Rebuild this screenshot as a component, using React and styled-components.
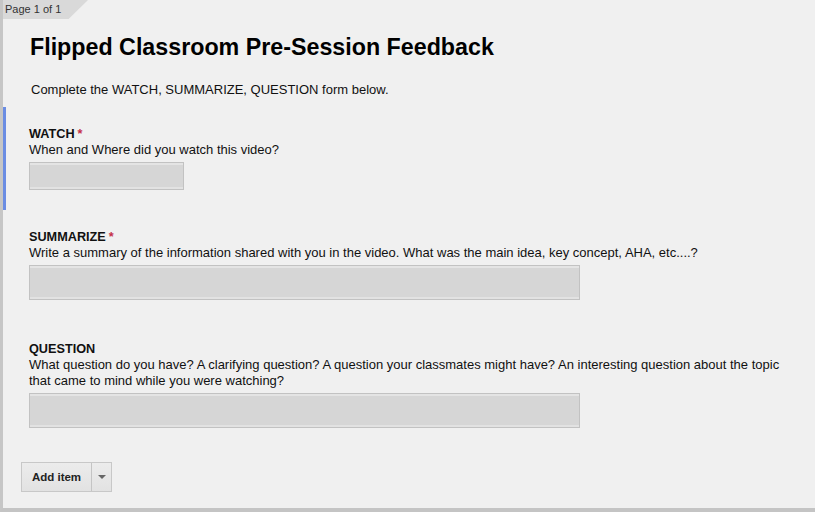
import React from "react";
import styled, { createGlobalStyle } from "styled-components";

const Global = createGlobalStyle`
  html, body { margin: 0; padding: 0; background: #f0f0f0; }
  body { font-family: "Liberation Sans", Arial, sans-serif; color: #111; }
`;

const Frame = styled.div`
  width: 815px;
  height: 512px;
  box-sizing: border-box;
  border-left: 3px solid #c6c6c6;
  border-bottom: 4px solid #c4c4c4;
  background: #f0f0f0;
  display: flex;
  flex-direction: column;
  overflow: hidden;
`;

const PageTab = styled.div`
  width: 88px;
  height: 19px;
  margin-left: -3px;
  background: #d9d9d9;
  clip-path: polygon(0 0, 100% 0, 78% 100%, 0 100%);
  font-size: 11px;
  color: #333;
  line-height: 19px;
  padding-left: 5px;
  box-sizing: border-box;
`;

const Title = styled.h1`
  margin: 15px 0 0 27px;
  font-size: 23.25px;
  line-height: 26px;
  font-weight: bold;
  color: #000;
`;

const Intro = styled.p`
  margin: 22px 0 0 28px;
  font-size: 13px;
  line-height: 16px;
  color: #111;
`;

const Items = styled.div`
  margin-top: 9px;
  display: flex;
  flex-direction: column;
`;

const Item = styled.div`
  border-left: 3px solid ${(p) => (p.$active ? "#6b8de3" : "transparent")};
  padding: 19px 20px ${(p) => p.$pb || 20}px 23px;
  display: flex;
  flex-direction: column;
`;

const Label = styled.div`
  font-size: 12.7px;
  line-height: 16px;
  font-weight: bold;
  color: #111;
`;

const Req = styled.span`
  color: #c5304a;
  margin-left: 3px;
`;

const Help = styled.div`
  font-size: 13px;
  line-height: 16px;
  color: #111;
`;

const Field = styled.div`
  margin-top: 4px;
  width: ${(p) => p.$w}px;
  height: ${(p) => p.$h}px;
  box-sizing: border-box;
  background: #d6d6d6;
  border: 1px solid #c2c2c2;
  box-shadow: inset 0 2px 0 #e4e4e4, inset 0 -2px 0 #e2e2e2;
`;

const ButtonRow = styled.div`
  margin: 14px 0 0 18px;
  display: flex;
`;

const AddButton = styled.div`
  display: flex;
  height: 30px;
  border: 1px solid #c8c8c8;
  background: linear-gradient(#ececec, #e2e2e2);
  box-sizing: border-box;
`;

const AddLabel = styled.div`
  width: 69px;
  font-size: 11.5px;
  font-weight: bold;
  color: #222;
  display: flex;
  align-items: center;
  justify-content: center;
  border-right: 1px solid #c4c4c4;
`;

const Arrow = styled.div`
  width: 19px;
  display: flex;
  align-items: center;
  justify-content: center;
  &::after {
    content: "";
    border-left: 4px solid transparent;
    border-right: 4px solid transparent;
    border-top: 4px solid #666;
  }
`;

export default function App() {
  return (
    <>
      <Global />
      <Frame>
        <PageTab>Page 1 of 1</PageTab>
        <Title>Flipped Classroom Pre-Session Feedback</Title>
        <Intro>Complete the WATCH, SUMMARIZE, QUESTION form below.</Intro>
        <Items>
          <Item $active>
            <Label>
              WATCH<Req>*</Req>
            </Label>
            <Help>When and Where did you watch this video?</Help>
            <Field $w={155} $h={28} />
          </Item>
          <Item $pb={22}>
            <Label>
              SUMMARIZE<Req>*</Req>
            </Label>
            <Help>
              Write a summary of the information shared with you in the video. What was the main idea, key concept, AHA, etc....?
            </Help>
            <Field $w={551} $h={35} />
          </Item>
          <Item>
            <Label>QUESTION</Label>
            <Help>
              What question do you have? A clarifying question? A question your classmates might have? An interesting question about the topic that came to mind while you were watching?
            </Help>
            <Field $w={551} $h={35} />
          </Item>
        </Items>
        <ButtonRow>
          <AddButton>
            <AddLabel>Add item</AddLabel>
            <Arrow />
          </AddButton>
        </ButtonRow>
      </Frame>
    </>
  );
}
